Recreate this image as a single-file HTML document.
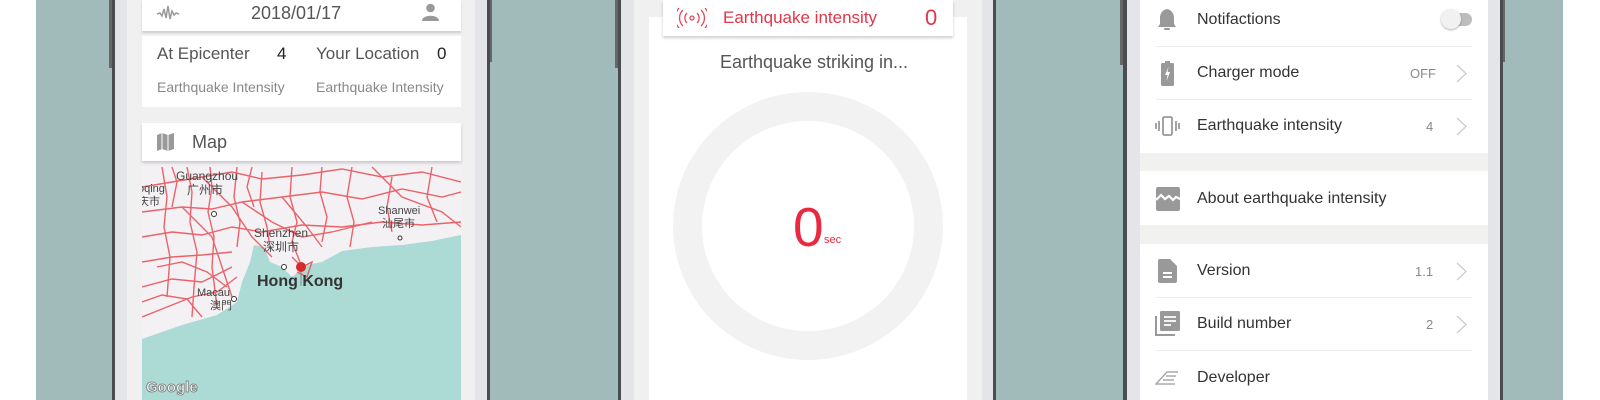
<!DOCTYPE html>
<html><head><meta charset="utf-8"><style>
*{margin:0;padding:0;box-sizing:border-box}
body{width:1600px;height:400px;background:#fff;position:relative;overflow:hidden;font-family:"Liberation Sans","Noto Sans CJK SC",sans-serif}
.a{position:absolute}
.teal{left:36px;top:0;width:1527px;height:400px;background:#a1bbbb}
.dark{background:#4a4d50;width:3px;top:0;height:400px}
.bez{background:#e3e5e9;top:0;height:400px}
.gray{background:#f0f0f0;top:0;height:400px}
.card{background:#fff}
.t{white-space:nowrap}
</style></head><body>
<div class="a teal"></div>

<!-- Phone 1 -->
<div class="a dark" style="left:112px"></div>
<div class="a" style="left:109px;top:0;width:3px;height:68px;background:#666"></div>
<div class="a bez" style="left:115px;width:12px"></div>
<div class="a gray" style="left:127px;width:348px"></div>
<div class="a bez" style="left:475px;width:12px"></div>
<div class="a dark" style="left:487px"></div>
<div class="a" style="left:490px;top:0;width:2px;height:62px;background:#666"></div>

<div class="a card" style="left:142px;top:0;width:319px;height:31px;box-shadow:0 2px 2px rgba(0,0,0,.15)"></div>
<svg class="a" style="left:156px;top:4px" width="24" height="18" viewBox="0 0 24 18"><path d="M1 10 L4 9 L6 12 L8 5 L10 14 L12 2 L14 15 L16 7 L18 11 L20 9 L23 10" fill="none" stroke="#999" stroke-width="1.5"/></svg>
<div class="a t" style="left:251px;top:3px;font-size:18px;color:#555">2018/01/17</div>
<svg class="a" style="left:422px;top:3px" width="17" height="18" viewBox="0 0 17 18"><circle cx="8.5" cy="5" r="4.3" fill="#999"/><path d="M0 18 C0 11 17 11 17 18Z" fill="#999"/></svg>

<div class="a card" style="left:142px;top:36px;width:319px;height:71px"></div>
<div class="a t" style="left:157px;top:44px;font-size:17px;color:#555">At Epicenter</div>
<div class="a t" style="left:277px;top:44px;font-size:17px;color:#222">4</div>
<div class="a t" style="left:316px;top:44px;font-size:17px;color:#555">Your Location</div>
<div class="a t" style="left:437px;top:44px;font-size:17px;color:#222">0</div>
<div class="a t" style="left:157px;top:79px;font-size:14px;color:#888">Earthquake Intensity</div>
<div class="a t" style="left:316px;top:79px;font-size:14px;color:#888">Earthquake Intensity</div>

<div class="a card" style="left:142px;top:123px;width:319px;height:38px;box-shadow:0 2px 3px rgba(0,0,0,.18);z-index:2"></div>
<svg class="a" style="left:157px;top:133px;z-index:3" width="17" height="18" viewBox="0 0 17 18"><path d="M0 2 L5 0 L11 2 L17 0 L17 16 L11 18 L5 16 L0 18Z" fill="#999"/><path d="M5 0 L5 16 M11 2 L11 18" stroke="#fff" stroke-width="1"/></svg>
<div class="a t" style="left:192px;top:132px;font-size:18px;color:#555;z-index:3">Map</div>

<svg class="a" style="left:142px;top:161px" width="319" height="239" viewBox="0 0 319 239">
<rect width="319" height="239" fill="#f4f1f4"/>
<g transform="translate(0,6)">
<path d="M0 172 L40 158 L75 148 L95 135 L100 115 L108 95 L112 78 L122 80 L128 95 L140 100 L150 110 L165 98 L180 95 L200 84 L230 80 L260 78 L290 74 L319 68 L319 233 L0 233Z" fill="#acdad5"/>
<g fill="none" stroke="#e9545c" stroke-width="1.4" opacity=".9">
<path d="M0 20 L30 15 L60 10 L90 5 L120 12 L160 8 L200 2 L240 10 L280 5 L319 15"/>
<path d="M0 45 L40 40 L70 42 L100 35 L140 30 L180 25 L220 32 L260 22 L300 30 L319 25"/>
<path d="M0 70 L30 65 L60 68 L90 60 L120 65 L160 58 L200 60 L240 55 L280 58 L319 55"/>
<path d="M0 95 L30 90 L60 88 L90 85"/><path d="M0 120 L30 112 L60 115 L90 100"/>
<path d="M0 150 L25 140 L50 130 L75 125 L95 110"/>
<path d="M20 0 L25 30 L22 60 L28 90 L25 130"/><path d="M45 0 L50 25 L48 55 L55 85 L52 120 L50 150"/>
<path d="M68 0 L70 20 L66 45 L72 70 L70 100 L75 140"/><path d="M95 0 L92 30 L98 55 L95 80"/>
<path d="M120 5 L118 35 L125 60 L128 80"/><path d="M150 0 L148 30 L155 55 L150 75 L158 95"/>
<path d="M180 0 L178 25 L185 50 L180 75"/><path d="M210 0 L205 30 L212 55 L208 80"/>
<path d="M250 10 L245 40 L250 65"/><path d="M290 0 L285 30 L295 55"/>
<path d="M60 10 L90 40 L110 70 L130 90"/><path d="M40 40 L70 70 L80 100 L90 130"/>
<path d="M140 30 L165 60 L180 80"/><path d="M100 35 L130 55 L160 70 L190 65 L230 55"/>
<path d="M15 100 L40 95 L65 105 L85 120"/><path d="M230 0 L260 30 L300 45 L319 60"/>
<path d="M150 90 L160 100 L170 95 L165 110 L155 105"/>
<path d="M0 135 L20 128 L45 132 L60 150"/><path d="M30 0 L35 15 L30 40"/><path d="M110 0 L105 20 L112 40"/>
</g>
<text x="34" y="13" font-size="12" fill="#444" font-family="Liberation Sans">Guangzhou</text>
<text x="45" y="27" font-size="12" fill="#444" font-family="Noto Sans CJK SC">广州市</text>
<text x="-4" y="25" font-size="11" fill="#444" font-family="Liberation Sans">oqing</text>
<text x="-4" y="38" font-size="11" fill="#444" font-family="Noto Sans CJK SC">庆市</text>
<circle cx="72" cy="47" r="2.5" fill="#fff" stroke="#333"/>
<text x="112" y="70" font-size="12" fill="#444" font-family="Liberation Sans">Shenzhen</text>
<text x="121" y="84" font-size="12" fill="#444" font-family="Noto Sans CJK SC">深圳市</text>
<circle cx="142" cy="100" r="2.5" fill="#fff" stroke="#333"/>
<text x="55" y="129" font-size="11" fill="#444" font-family="Liberation Sans">Macau</text>
<text x="68" y="142" font-size="11" fill="#444" font-family="Noto Sans CJK SC">澳門</text>
<circle cx="92" cy="132" r="2.5" fill="#fff" stroke="#333"/>
<text x="115" y="119" font-size="16" font-weight="bold" fill="#333" font-family="Liberation Sans">Hong Kong</text>
<text x="236" y="47" font-size="11" fill="#444" font-family="Liberation Sans">Shanwei</text>
<text x="240" y="60" font-size="11" fill="#444" font-family="Noto Sans CJK SC">汕尾市</text>
<circle cx="258" cy="71" r="2" fill="#fff" stroke="#333"/>
<line x1="159" y1="103" x2="159" y2="119" stroke="#888"/>
<circle cx="159" cy="100" r="5" fill="#d52b2b"/>
</g>
<text x="4" y="231" font-size="15" font-weight="bold" fill="#fff" stroke="#777" stroke-width=".8" font-family="Liberation Sans">Google</text>
</svg>

<!-- Phone 2 -->
<div class="a dark" style="left:618px"></div>
<div class="a" style="left:615px;top:0;width:3px;height:68px;background:#666"></div>
<div class="a bez" style="left:621px;width:13px"></div>
<div class="a gray" style="left:634px;width:348px"></div>
<div class="a bez" style="left:982px;width:11px"></div>
<div class="a dark" style="left:993px"></div>
<div class="a card" style="left:649px;top:17px;width:318px;height:383px"></div>
<div class="a card" style="left:663px;top:0;width:290px;height:36px;box-shadow:0 2px 3px rgba(0,0,0,.2)"></div>
<svg class="a" style="left:677px;top:8px" width="30" height="20" viewBox="0 0 30 20" fill="none" stroke="#e34a5a" stroke-width="1.3"><circle cx="15" cy="10" r="2"/><path d="M10 5 A7 7 0 0 0 10 15 M20 5 A7 7 0 0 1 20 15 M6 2 A11 11 0 0 0 6 18 M24 2 A11 11 0 0 1 24 18 M2 0 A15 15 0 0 0 2 20 M28 0 A15 15 0 0 1 28 20"/></svg>
<div class="a t" style="left:723px;top:8px;font-size:17px;color:#e0364a">Earthquake intensity</div>
<div class="a t" style="left:925px;top:5px;font-size:22px;color:#e0364a">0</div>
<div class="a t" style="left:664px;width:300px;text-align:center;top:52px;font-size:18px;color:#555">Earthquake striking in...</div>
<div class="a" style="left:673px;top:92px;width:270px;height:268px;border-radius:50%;border:29px solid #f2f2f2"></div>
<div class="a t" style="left:793px;top:197px;font-size:55px;color:#e8293f;line-height:60px">0</div>
<div class="a t" style="left:824px;top:234px;font-size:11px;color:#e8293f">sec</div>

<!-- Phone 3 -->
<div class="a dark" style="left:1123px;width:4px"></div>
<div class="a" style="left:1120px;top:0;width:3px;height:65px;background:#666"></div>
<div class="a bez" style="left:1127px;width:13px"></div>
<div class="a card" style="left:1140px;top:0;width:348px;height:400px"></div>
<div class="a bez" style="left:1488px;width:12px"></div>
<div class="a dark" style="left:1500px"></div>
<div class="a" style="left:1503px;top:0;width:2px;height:62px;background:#666"></div>
<div class="a" style="left:1140px;top:153px;width:348px;height:18px;background:#f1f1f0"></div>
<div class="a" style="left:1140px;top:225px;width:348px;height:19px;background:#f1f1f0"></div>
<div class="a" style="left:1156px;top:46px;width:316px;height:1px;background:#ececec"></div>
<div class="a" style="left:1156px;top:99px;width:316px;height:1px;background:#ececec"></div>
<div class="a" style="left:1156px;top:297px;width:316px;height:1px;background:#ececec"></div>
<div class="a" style="left:1156px;top:350px;width:316px;height:1px;background:#ececec"></div>

<svg class="a" style="left:1157px;top:8px" width="20" height="24" viewBox="0 0 20 24"><path d="M10 1 C5 2 3 6 3 10 L3 16 L1 19 L19 19 L17 16 L17 10 C17 6 15 2 10 1Z" fill="#999"/><rect x="7" y="20" width="6" height="2" rx="1" fill="#999"/></svg>
<div class="a t" style="left:1197px;top:11px;font-size:16px;color:#333">Notifactions</div>
<div class="a" style="left:1446px;top:13px;width:26px;height:13px;border-radius:7px;background:#bdbdbd"></div>
<div class="a" style="left:1441px;top:9px;width:20px;height:20px;border-radius:50%;background:#f1f1f1;box-shadow:0 1px 2px rgba(0,0,0,.3)"></div>

<svg class="a" style="left:1161px;top:61px" width="13" height="25" viewBox="0 0 13 25"><rect x="4" y="0" width="5" height="3" fill="#999"/><rect x="0" y="2" width="13" height="23" rx="1.5" fill="#999"/><path d="M7.5 6 L4 14 L6.5 14 L5.5 20 L9 11 L6.5 11Z" fill="#fff"/></svg>
<div class="a t" style="left:1197px;top:64px;font-size:16px;color:#333">Charger mode</div>
<div class="a t" style="left:1410px;top:66px;font-size:13px;color:#888">OFF</div>
<svg class="a" style="left:1456px;top:64px" width="11" height="19" viewBox="0 0 11 19"><path d="M1 1 L10 9.5 L1 18" fill="none" stroke="#ccc" stroke-width="1.3"/></svg>

<svg class="a" style="left:1155px;top:115px" width="25" height="22" viewBox="0 0 25 22" fill="none" stroke="#999" stroke-width="1.8"><rect x="8" y="2" width="9" height="18" rx="1.5"/><path d="M4 6 V16 M1 8 V14 M21 6 V16 M24 8 V14"/></svg>
<div class="a t" style="left:1197px;top:117px;font-size:16px;color:#333">Earthquake intensity</div>
<div class="a t" style="left:1426px;top:119px;font-size:13px;color:#888">4</div>
<svg class="a" style="left:1456px;top:117px" width="11" height="19" viewBox="0 0 11 19"><path d="M1 1 L10 9.5 L1 18" fill="none" stroke="#ccc" stroke-width="1.3"/></svg>

<svg class="a" style="left:1156px;top:187px" width="24" height="24" viewBox="0 0 24 24"><rect width="24" height="24" rx="2" fill="#999"/><path d="M0 13 L5 8 L9 12 L13 9 L17 13 L20 10 L24 12" fill="none" stroke="#fff" stroke-width="2.2"/></svg>
<div class="a t" style="left:1197px;top:190px;font-size:16px;color:#333">About earthquake intensity</div>

<svg class="a" style="left:1158px;top:259px" width="19" height="24" viewBox="0 0 19 24"><path d="M2 0 L12 0 L19 7 L19 22 Q19 24 17 24 L2 24 Q0 24 0 22 L0 2 Q0 0 2 0Z" fill="#999"/><path d="M5 14 H14 M5 18 H14" stroke="#fff" stroke-width="2"/></svg>
<div class="a t" style="left:1197px;top:262px;font-size:16px;color:#333">Version</div>
<div class="a t" style="left:1415px;top:264px;font-size:13px;color:#888">1.1</div>
<svg class="a" style="left:1456px;top:262px" width="11" height="19" viewBox="0 0 11 19"><path d="M1 1 L10 9.5 L1 18" fill="none" stroke="#ccc" stroke-width="1.3"/></svg>

<svg class="a" style="left:1155px;top:311px" width="25" height="25" viewBox="0 0 25 25"><path d="M1 5 V24 H20" fill="none" stroke="#999" stroke-width="2"/><rect x="5" y="0" width="20" height="20" rx="1.5" fill="#999"/><path d="M9 6 H21 M9 10 H21 M9 14 H16" stroke="#fff" stroke-width="1.8"/></svg>
<div class="a t" style="left:1197px;top:315px;font-size:16px;color:#333">Build number</div>
<div class="a t" style="left:1426px;top:317px;font-size:13px;color:#888">2</div>
<svg class="a" style="left:1456px;top:315px" width="11" height="19" viewBox="0 0 11 19"><path d="M1 1 L10 9.5 L1 18" fill="none" stroke="#ccc" stroke-width="1.3"/></svg>

<svg class="a" style="left:1155px;top:371px" width="24" height="14" viewBox="0 0 24 14" fill="none" stroke="#aaa" stroke-width="1.5"><path d="M23 1 H12 L1 13 H20 M21 5 H11 M19 9 H8"/></svg>
<div class="a t" style="left:1197px;top:369px;font-size:16px;color:#333">Developer</div>
</body></html>
